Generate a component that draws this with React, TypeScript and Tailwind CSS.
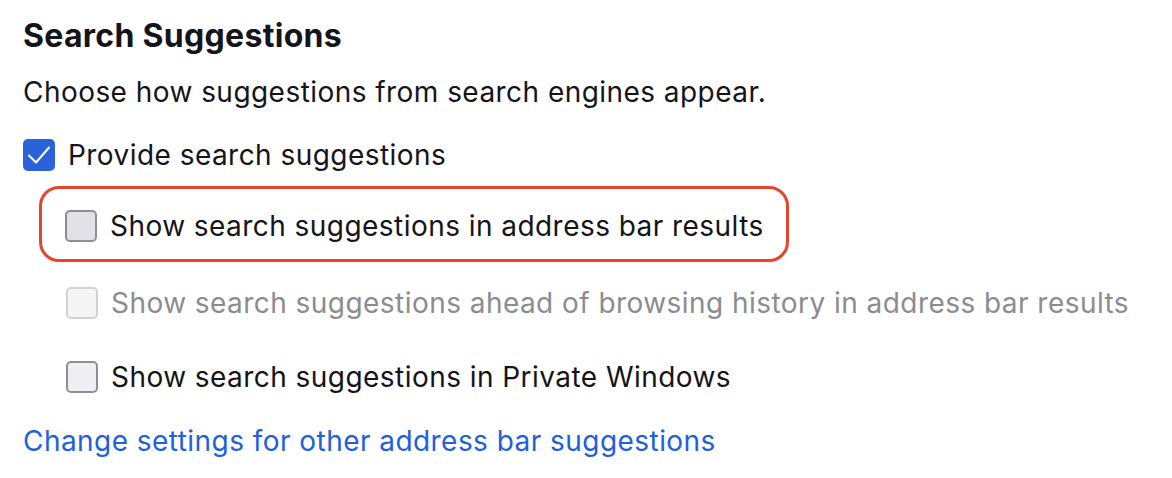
import React from 'react';

function Box({ state }: { state: 'checked' | 'focus' | 'disabled' | 'off' }) {
  if (state === 'checked') {
    return (
      <span className="flex h-[32px] w-[32px] shrink-0 items-center justify-center rounded-[5px] bg-[#2a63d9]">
        <svg width="24" height="24" viewBox="0 0 24 24" fill="none">
          <path d="M2 12.5 L9 19.5 L22 4.5" stroke="white" strokeWidth="2" strokeLinecap="round" strokeLinejoin="round" />
        </svg>
      </span>
    );
  }
  const cls =
    state === 'focus'
      ? 'border-[#8e8e96] bg-[#e1e1e7]'
      : state === 'disabled'
      ? 'border-[#d3d3d6] bg-[#f5f5f6]'
      : 'border-[#8e8e96] bg-[#efeff3]';
  return <span className={`h-[32px] w-[32px] shrink-0 rounded-[5px] border-2 ${cls}`} />;
}

export default function App() {
  return (
    <div className="min-h-screen bg-white pl-[23px] pt-[14px] font-['Inter',sans-serif] text-[#15141a]">
      <h1 className="text-[32px] font-bold leading-[44px] tracking-[0.3px]">Search Suggestions</h1>
      <p className="mt-[14px] text-[28px] leading-[40px] tracking-[0.45px]">
        Choose how suggestions from search engines appear.
      </p>

      <div className="mt-[27px] flex h-[32px] items-center gap-[13px]">
        <Box state="checked" />
        <span className="text-[28px] tracking-[0.45px]">Provide search suggestions</span>
      </div>

      <div className="ml-[16px] mt-[15px] h-[76px] w-[750px] rounded-[20px] border-[3px] border-[#e8442b] pl-[23px] pt-[21px]">
        <div className="flex h-[32px] items-center gap-[13px]">
          <Box state="focus" />
          <span className="text-[28px] tracking-[0.45px]">Show search suggestions in address bar results</span>
        </div>
      </div>

      <div className="ml-[43px] mt-[25px] flex h-[32px] items-center gap-[13px]">
        <Box state="disabled" />
        <span className="text-[28px] tracking-[0.45px] text-[#8c8c90]">
          Show search suggestions ahead of browsing history in address bar results
        </span>
      </div>

      <div className="ml-[43px] mt-[42px] flex h-[32px] items-center gap-[13px]">
        <Box state="off" />
        <span className="text-[28px] tracking-[0.45px]">Show search suggestions in Private Windows</span>
      </div>

      <a href="#" className="mt-[28px] block text-[28px] leading-[40px] tracking-[0.45px] text-[#2160dc]">
        Change settings for other address bar suggestions
      </a>
    </div>
  );
}
